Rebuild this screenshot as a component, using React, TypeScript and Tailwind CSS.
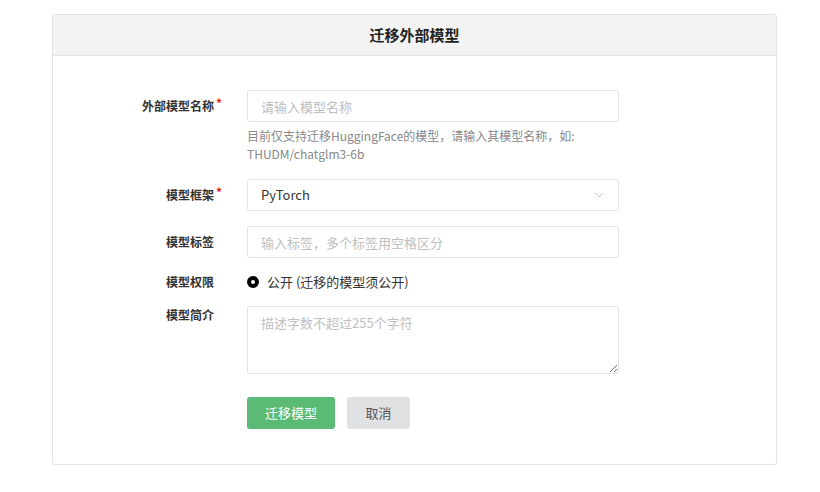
import React from "react";

const Label = ({ t, req }: { t: string; req?: boolean }) => (
  <div className="w-[176px] shrink-0 pr-[7px] text-right font-bold text-[12px] text-[#333] leading-[32px]">
    {t}
    <span className={req ? "text-[#e02020] ml-[2px] relative -top-[3px]" : "invisible ml-[2px]"}>*</span>
  </div>
);

export default function App() {
  return (
    <div className="w-[820px] h-[492px] bg-white pt-[14px]" style={{ fontFamily: '"Noto Sans CJK SC", "Noto Sans", sans-serif' }}>
      <div className="ml-[52px] w-[725px] h-[451px] border border-[#e3e3e3] rounded-[3px]">
        <div className="h-[41px] bg-[#f3f3f3] border-b border-[#e3e3e3] flex items-center justify-center text-[15px] font-bold text-[#222]">迁移外部模型</div>
        <div className="pt-[34px] text-[13px]">
          <div className="flex gap-[18px]">
            <Label t="外部模型名称" req />
            <div>
              <input placeholder="请输入模型名称" className="w-[372px] h-[32px] border border-[#e3e3e6] rounded-[3px] px-[13px] text-[13px] placeholder:text-[#c0c0c0] outline-none" />
              <div className="w-[372px] mt-[5px] text-[12px] leading-[18px] text-[#888]">目前仅支持迁移HuggingFace的模型，请输入其模型名称，如: THUDM/chatglm3-6b</div>
            </div>
          </div>
          <div className="flex gap-[18px] mt-[16px]">
            <Label t="模型框架" req />
            <div className="w-[372px] h-[32px] border border-[#e3e3e6] rounded-[3px] px-[13px] flex items-center justify-between text-[#333]">
              PyTorch
              <svg width="12" height="12" viewBox="0 0 12 12"><path d="M2 4l4 4 4-4" fill="none" stroke="#c8c8c8" strokeWidth="1" /></svg>
            </div>
          </div>
          <div className="flex gap-[18px] mt-[15px]">
            <Label t="模型标签" />
            <input placeholder="输入标签，多个标签用空格区分" className="w-[372px] h-[32px] border border-[#e3e3e6] rounded-[3px] px-[13px] text-[13px] placeholder:text-[#c0c0c0] outline-none" />
          </div>
          <div className="flex gap-[18px] mt-[12px] h-[24px] items-center">
            <div className="w-[176px] shrink-0 pr-[7px] text-right font-bold text-[12px] text-[#333]">模型权限<span className="invisible ml-[2px]">*</span></div>
            <div className="flex items-center gap-[8px] text-[#333]">
              <span className="w-[12px] h-[12px] rounded-full border-[4px] border-black bg-white" />
              公开 (迁移的模型须公开)
            </div>
          </div>
          <div className="flex gap-[18px] mt-[12px]">
            <div className="w-[176px] shrink-0 pr-[7px] text-right font-bold text-[12px] text-[#333] leading-[18px]">模型简介<span className="invisible ml-[2px]">*</span></div>
            <textarea placeholder="描述字数不超过255个字符" className="w-[372px] h-[68px] border border-[#e3e3e6] rounded-[3px] px-[13px] py-[6px] text-[13px] placeholder:text-[#c0c0c0] outline-none" />
          </div>
          <div className="flex gap-[12px] mt-[23px] ml-[194px]">
            <button className="w-[88px] h-[32px] bg-[#5bba75] text-white rounded-[3px] text-[13px]">迁移模型</button>
            <button className="w-[63px] h-[32px] bg-[#e0e1e2] text-[#555] rounded-[3px] text-[13px]">取消</button>
          </div>
        </div>
      </div>
    </div>
  );
}
